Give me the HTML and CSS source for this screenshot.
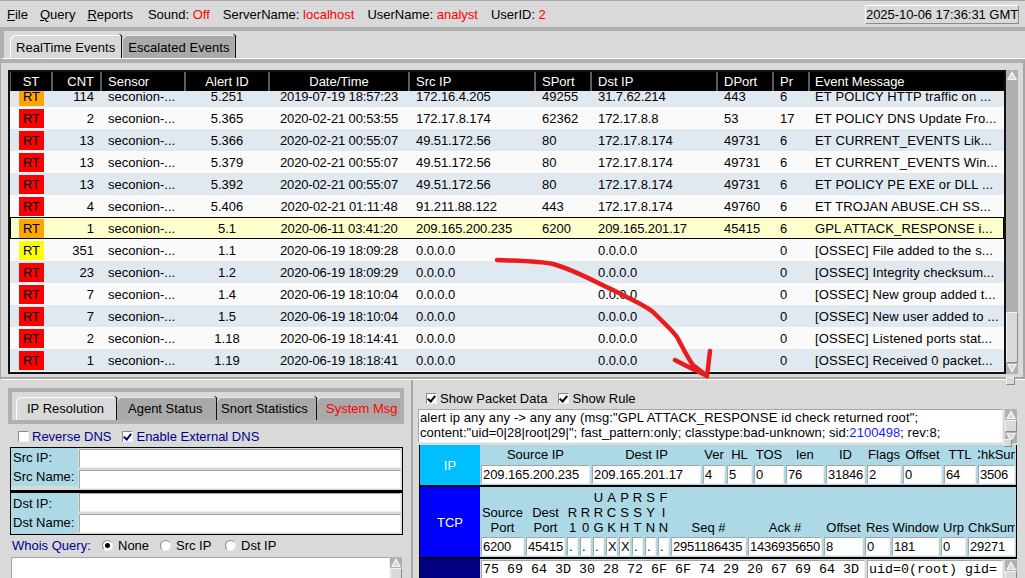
FILE: index.html
```html
<!DOCTYPE html>
<html lang="en">
<head>
    <meta charset="UTF-8">
    <title>Sguil</title>
    <link rel="stylesheet" href="styles.css">
</head>
<body>
    <div class="menubar">
        <span class="menu"><u>F</u>ile</span>
        <span class="menu menu-query"><u>Q</u>uery</span>
        <span class="menu menu-reports"><u>R</u>eports</span>
        <span class="info info-sound">Sound: <b>Off</b></span>
        <span class="info info-server">ServerName: <b>localhost</b></span>
        <span class="info info-user">UserName: <b>analyst</b></span>
        <span class="info info-id">UserID: <b>2</b></span>
        <span class="clock">2025-10-06 17:36:31 GMT</span>
    </div>

    <div class="top-tabs">
        <span class="tab active">RealTime Events</span>
        <span class="tab">Escalated Events</span>
    </div>

    <div class="events">
        <div class="event-table">
            <div class="row head">
                <span class="c">ST</span><span class="r">CNT</span><span>Sensor</span><span class="c">Alert ID</span><span class="c">Date/Time</span><span>Src IP</span><span>SPort</span><span>Dst IP</span><span>DPort</span><span>Pr</span><span>Event Message</span>
            </div>
            <div class="rows">
                <div class="row first"><span class="st orange">RT</span><span class="r">114</span><span>seconion-...</span><span class="c">5.251</span><span class="c">2019-07-19 18:57:23</span><span>172.16.4.205</span><span>49255</span><span>31.7.62.214</span><span>443</span><span>6</span><span>ET POLICY HTTP traffic on ...</span></div>
                <div class="row"><span class="st red">RT</span><span class="r">2</span><span>seconion-...</span><span class="c">5.365</span><span class="c">2020-02-21 00:53:55</span><span>172.17.8.174</span><span>62362</span><span>172.17.8.8</span><span>53</span><span>17</span><span>ET POLICY DNS Update Fro...</span></div>
                <div class="row"><span class="st red">RT</span><span class="r">13</span><span>seconion-...</span><span class="c">5.366</span><span class="c">2020-02-21 00:55:07</span><span>49.51.172.56</span><span>80</span><span>172.17.8.174</span><span>49731</span><span>6</span><span>ET CURRENT_EVENTS Lik...</span></div>
                <div class="row"><span class="st red">RT</span><span class="r">13</span><span>seconion-...</span><span class="c">5.379</span><span class="c">2020-02-21 00:55:07</span><span>49.51.172.56</span><span>80</span><span>172.17.8.174</span><span>49731</span><span>6</span><span>ET CURRENT_EVENTS Win...</span></div>
                <div class="row"><span class="st red">RT</span><span class="r">13</span><span>seconion-...</span><span class="c">5.392</span><span class="c">2020-02-21 00:55:07</span><span>49.51.172.56</span><span>80</span><span>172.17.8.174</span><span>49731</span><span>6</span><span>ET POLICY PE EXE or DLL ...</span></div>
                <div class="row"><span class="st red">RT</span><span class="r">4</span><span>seconion-...</span><span class="c">5.406</span><span class="c">2020-02-21 01:11:48</span><span>91.211.88.122</span><span>443</span><span>172.17.8.174</span><span>49760</span><span>6</span><span>ET TROJAN ABUSE.CH SS...</span></div>
                <div class="row selected"><span class="st orange">RT</span><span class="r">1</span><span>seconion-...</span><span class="c">5.1</span><span class="c">2020-06-11 03:41:20</span><span>209.165.200.235</span><span>6200</span><span>209.165.201.17</span><span>45415</span><span>6</span><span>GPL ATTACK_RESPONSE i...</span></div>
                <div class="row"><span class="st yellow">RT</span><span class="r">351</span><span>seconion-...</span><span class="c">1.1</span><span class="c">2020-06-19 18:09:28</span><span>0.0.0.0</span><span></span><span>0.0.0.0</span><span></span><span>0</span><span>[OSSEC] File added to the s...</span></div>
                <div class="row"><span class="st red">RT</span><span class="r">23</span><span>seconion-...</span><span class="c">1.2</span><span class="c">2020-06-19 18:09:29</span><span>0.0.0.0</span><span></span><span>0.0.0.0</span><span></span><span>0</span><span>[OSSEC] Integrity checksum...</span></div>
                <div class="row"><span class="st red">RT</span><span class="r">7</span><span>seconion-...</span><span class="c">1.4</span><span class="c">2020-06-19 18:10:04</span><span>0.0.0.0</span><span></span><span>0.0.0.0</span><span></span><span>0</span><span>[OSSEC] New group added t...</span></div>
                <div class="row"><span class="st red">RT</span><span class="r">7</span><span>seconion-...</span><span class="c">1.5</span><span class="c">2020-06-19 18:10:04</span><span>0.0.0.0</span><span></span><span>0.0.0.0</span><span></span><span>0</span><span>[OSSEC] New user added to ...</span></div>
                <div class="row"><span class="st red">RT</span><span class="r">2</span><span>seconion-...</span><span class="c">1.18</span><span class="c">2020-06-19 18:14:41</span><span>0.0.0.0</span><span></span><span>0.0.0.0</span><span></span><span>0</span><span>[OSSEC] Listened ports stat...</span></div>
                <div class="row"><span class="st red">RT</span><span class="r">1</span><span>seconion-...</span><span class="c">1.19</span><span class="c">2020-06-19 18:18:41</span><span>0.0.0.0</span><span></span><span>0.0.0.0</span><span></span><span>0</span><span>[OSSEC] Received 0 packet...</span></div>
            </div>
        </div>
        <div class="vscroll events-scroll">
            <span class="arrow up"></span>
            <span class="trough"></span>
            <span class="thumb"></span>
            <span class="arrow down"></span>
        </div>
    </div>

    <div class="panes">
        <div class="left-pane">
            <div class="sub-tabs">
                <span class="tab active">IP Resolution</span>
                <span class="tab">Agent Status</span>
                <span class="tab">Snort Statistics</span>
                <span class="tab alert">System Msg</span>
            </div>
            <div class="dns-options">
                <span class="check"></span><span class="opt opt-rev">Reverse DNS</span>
                <span class="check on navy"></span><span class="opt">Enable External DNS</span>
            </div>
            <div class="addr-box">
                <div class="addr-labels"><span>Src IP:</span><span>Src Name:</span></div>
                <div class="addr-fields"><div class="field"></div><div class="field"></div></div>
            </div>
            <div class="addr-box second">
                <div class="addr-labels"><span>Dst IP:</span><span>Dst Name:</span></div>
                <div class="addr-fields"><div class="field"></div><div class="field"></div></div>
            </div>
            <div class="whois">
                <span class="whois-title">Whois Query:</span>
                <span class="radio on"></span><span class="radio-label">None</span>
                <span class="radio"></span><span class="radio-label wide">Src IP</span>
                <span class="radio"></span><span class="radio-label">Dst IP</span>
            </div>
            <div class="whois-out">
                <div class="out-text"></div>
                <div class="vscroll"><span class="arrow up"></span><span class="thumb"></span></div>
            </div>
        </div>

        <div class="right-pane">
            <div class="packet-options">
                <span class="check on"></span><span class="opt opt-packet">Show Packet Data</span>
                <span class="check on"></span><span class="opt">Show Rule</span>
            </div>
            <div class="rule-row">
                <div class="rule-text">
                    <div class="rule-line wide-line">alert ip any any -&gt; any any (msg:"GPL ATTACK_RESPONSE id check returned root";</div>
                    <div class="rule-line">content:"uid=0|28|root|29|"; fast_pattern:only; classtype:bad-unknown; sid:<span class="sid">2100498</span>; rev:8;</div>
                </div>
                <div class="vscroll rule-scroll"><span class="arrow up"></span><span class="thumb"></span><span class="arrow down"></span></div>
            </div>
            <div class="packet">
                <div class="proto">
                    <div class="proto-name ip">IP</div>
                    <div class="grid grid-ip">
                        <span>Source IP</span><span>Dest IP</span><span>Ver</span><span>HL</span><span>TOS</span><span>len</span><span>ID</span><span>Flags</span><span>Offset</span><span>TTL</span><span>ChkSum</span>
                        <div class="field addr">209.165.200.235</div><div class="field addr">209.165.201.17</div><div class="field">4</div><div class="field">5</div><div class="field">0</div><div class="field">76</div><div class="field">31846</div><div class="field">2</div><div class="field">0</div><div class="field">64</div><div class="field">3506</div>
                    </div>
                </div>
                <div class="proto">
                    <div class="proto-name tcp">TCP</div>
                    <div class="grid grid-tcp">
                        <span>Source<br>Port</span><span>Dest<br>Port</span><span>R<br>1</span><span>R<br>0</span><span>U<br>R<br>G</span><span>A<br>C<br>K</span><span>P<br>S<br>H</span><span>R<br>S<br>T</span><span>S<br>Y<br>N</span><span>F<br>I<br>N</span><span>Seq #</span><span>Ack #</span><span>Offset</span><span>Res</span><span>Window</span><span>Urp</span><span>ChkSum</span>
                        <div class="field">6200</div><div class="field">45415</div><div class="field">.</div><div class="field">.</div><div class="field">.</div><div class="field">X</div><div class="field">X</div><div class="field">.</div><div class="field">.</div><div class="field">.</div><div class="field">2951186435</div><div class="field">1436935650</div><div class="field">8</div><div class="field">0</div><div class="field">181</div><div class="field">0</div><div class="field">29271</div>
                    </div>
                </div>
                <div class="proto data-row">
                    <div class="proto-name data"></div>
                    <div class="data-body">
                        <div class="field mono hex">75 69 64 3D 30 28 72 6F 6F 74 29 20 67 69 64 3D</div>
                        <div class="field mono ascii">uid=0(root) gid=</div>
                        <div class="vscroll"><span class="arrow up"></span><span class="thumb"></span></div>
                    </div>
                </div>
            </div>
        </div>
    </div>

    <span class="sash-handle top-sash"></span>
    <span class="sash-handle rule-sash"></span>

    <!-- red annotation drawn on top of the window -->
    <svg class="annotation" width="1025" height="578" viewBox="0 0 1025 578">
        <path d="M497 260 C520 261 540 261 553 264 C575 270 595 282 613 290 C630 299 645 305 653 312 C665 324 672 330 677 337 C684 350 689 360 693 365 L707 376 M675 360 C686 366 697 371 707 376 C708 368 709 360 710 351" />
    </svg>
</body>
</html>
```

FILE: styles.css
```css
html, body {
    margin: 0;
    padding: 0;
    width: 1025px;
    height: 578px;
    overflow: hidden;
}
body {
    position: relative;
    background: #d9d9d9;
    color: #000;
    font-family: "Liberation Sans", Arial, sans-serif;
    font-size: 13px;
}

/* menu bar */
.menubar {
    display: flex;
    align-items: center;
    height: 25px;
    padding: 1px 0 0 7px;
    border-top: 1px solid #a6a6a6;
    border-bottom: 4px solid #b0b0b0;
}
.menu-query { margin-left: 12px; }
.menu-reports { margin-left: 12px; }
.info b { color: #ff0000; font-weight: normal; }
.info-sound { margin-left: 15px; }
.info-server { margin-left: 13px; }
.info-user { margin-left: 13px; }
.info-id { margin-left: 13px; }
.clock {
    margin-left: auto;
    margin-right: 6px;
    width: 154px;
    height: 19px;
    line-height: 17px;
    box-sizing: border-box;
    text-align: center;
    white-space: nowrap;
    letter-spacing: -0.05px;
    border: 1px solid;
    border-color: #fff #8a8a8a #8a8a8a #fff;
}

/* tabs */
.top-tabs {
    display: flex;
    align-items: flex-end;
    height: 27px;
    padding-left: 6px;
    border-left: 4px solid #b0b0b0;
    border-bottom: 1px solid #fff;
}
.tab {
    position: relative;
    flex: none;
    box-sizing: border-box;
    display: block;
    height: 23px;
    line-height: 21px;
    padding: 0 6px;
    background: #a9a9a9;
    border-top: 1px solid #e8e8e8;
    border-right: 1px solid #111;
    border-top-left-radius: 6px;
    white-space: nowrap;
}
.top-tabs .tab { line-height: 23px; margin-right: 1px; padding: 0 6px 0 5px; letter-spacing: 0.05px; }
.top-tabs .tab + .tab { width: 113px; }
.tab.active {
    background: #d9d9d9;
    border-left: 1px solid #fff;
    border-top-color: #fff;
}
.tab::after {
    content: "";
    position: absolute;
    top: -1px;
    right: -2px;
    width: 4px;
    height: 1px;
    background: #333;
    transform: rotate(45deg);
}

/* events table */
.events {
    display: flex;
    height: 320px;
    border-top: 4px solid #b0b0b0;
    border-bottom: 2px solid #a6a6a6;
    border-left: 1px solid #a6a6a6;
    border-right: 2px solid #a6a6a6;
    padding: 7px 0 0 7px;
    box-sizing: border-box;
}
.event-table {
    box-sizing: border-box;
    width: 998px;
    height: 304px;
    border: 2px solid #111;
    background: #fafafa;
}
.row {
    display: grid;
    grid-template-columns: 40px 47px 82px 82px 138px 124px 54px 124px 54px 34px 194px;
    column-gap: 2px;
    padding-left: 1px;
    height: 22px;
    line-height: 23px;
    white-space: nowrap;
}
.row > span { padding-left: 6px; overflow: hidden; }
.row > .c { padding: 0; text-align: center; }
.row > .r { padding: 0 6px 0 0; text-align: right; }
.row > span:last-child { padding-left: 5px; letter-spacing: 0.13px; }
.row > span:nth-child(5) { letter-spacing: -0.14px; }
.row > span:nth-child(6),
.row > span:nth-child(8) { letter-spacing: -0.1px; }
.row.head {
    height: 19px;
    line-height: 19px;
    background: #5c5c5c;
    color: #fff;
}
.row.head > span { background: #000; letter-spacing: 0; }
.rows { height: 281px; }
.rows .row:nth-child(odd) { background: #e0e8f0; }
.rows .first { height: 16px; line-height: 11px; }
.rows .first > span { overflow: visible; }
.rows .row.selected {
    background: #ffffcc;
    box-shadow: inset 0 0 0 1px #000;
}
.rows .row > .st {
    padding: 0;
    width: 25px;
    height: 19px;
    line-height: 19px;
    margin: 2px 0 0 8px;
    text-align: center;
    letter-spacing: 0;
}
.rows .first > .st { height: 15px; line-height: 11px; margin-top: 0; }
.red { background: #ff0000; }
.orange { background: #ffa500; }
.yellow { background: #ffff00; }

/* scrollbars */
.vscroll {
    display: flex;
    flex-direction: column;
    flex: none;
    width: 12px;
    background: #b0b0b0;
    box-sizing: border-box;
}
.events-scroll { height: 304px; }
.arrow {
    display: block;
    height: 11px;
    flex: none;
    position: relative;
}
.arrow::before,
.arrow::after {
    content: "";
    position: absolute;
    width: 0;
    height: 0;
}
.arrow::before {
    left: 1px;
    border-left: 5px solid transparent;
    border-right: 5px solid transparent;
}
.arrow::after {
    left: 3px;
    border-left: 3px solid transparent;
    border-right: 3px solid transparent;
}
.arrow.up::before { top: 1px; border-bottom: 9px solid #f5f5f5; }
.arrow.up::after { top: 4px; border-bottom: 5px solid #d9d9d9; }
.arrow.down::before { top: 1px; border-top: 9px solid #f5f5f5; }
.arrow.down::after { top: 2px; border-top: 5px solid #d9d9d9; }
.trough { display: block; height: 231px; flex: none; }
.thumb {
    display: block;
    flex: 1;
    background: #d9d9d9;
    border: 1px solid;
    border-color: #f2f2f2 #8a8a8a #8a8a8a #f2f2f2;
}

/* lower panes */
.panes {
    display: flex;
    height: 200px;
    margin-left: 2px;
    border-top: 1px solid #fff;
}
.left-pane {
    width: 409px;
    flex: none;
    padding: 8px 0 0 0;
    box-sizing: border-box;
}
.sub-tabs {
    display: flex;
    align-items: flex-end;
    box-sizing: border-box;
    width: 396px;
    height: 36px;
    margin-left: 6px;
    padding-left: 4px;
    border: 4px solid #b0b0b0;
    background: #d9d9d9;
    overflow: hidden;
}
.sub-tabs .tab { width: 100px; padding: 0 0 0 11px; }
.sub-tabs .tab.active { width: 101px; padding-left: 10px; }
.sub-tabs .tab:nth-child(3) { padding-left: 4px; }
.sub-tabs .alert { color: #ff0000; border-right: 0; padding-left: 9px; }

.check, .radio {
    display: inline-block;
    position: relative;
    flex: none;
    box-sizing: border-box;
    background: #fff;
}
.check {
    width: 11px;
    height: 11px;
    border: 1px solid;
    border-color: #8a8a8a #eee #eee #8a8a8a;
}
.check.on::after {
    content: "";
    position: absolute;
    left: 2px;
    top: 0;
    width: 3px;
    height: 6px;
    border: solid #000;
    border-width: 0 2px 2px 0;
    transform: rotate(40deg);
}
.check.navy::after { border-color: #00008b; }
.radio {
    width: 11px;
    height: 11px;
    border-radius: 50%;
    border: 1px solid;
    border-color: #8a8a8a #eee #eee #8a8a8a;
}
.radio.on::after {
    content: "";
    position: absolute;
    left: 2px;
    top: 2px;
    width: 5px;
    height: 5px;
    border-radius: 50%;
    background: #000;
}
.dns-options {
    display: flex;
    align-items: center;
    box-sizing: border-box;
    height: 23px;
    padding: 1px 0 0 16px;
    color: #00008b;
}
.dns-options .opt { margin-left: 3px; }
.opt-rev { margin-right: 11px; }

.addr-box {
    display: flex;
    box-sizing: border-box;
    width: 393px;
    height: 46px;
    margin-left: 8px;
    border: 1px solid #000;
    border-bottom-width: 3px;
    background: #d9d9d9;
}
.addr-box.second {
    height: 42px;
    border-width: 0 1px 1px;
}
.addr-labels {
    display: flex;
    flex-direction: column;
    align-self: flex-start;
    width: 67px;
    height: 38px;
    padding-left: 2px;
    line-height: 19px;
    box-sizing: border-box;
    background: #add8e6;
}
.second .addr-labels {
    align-self: stretch;
    height: auto;
    padding-top: 1px;
}
.addr-fields {
    flex: 1;
    display: flex;
    flex-direction: column;
    gap: 2px;
    padding: 1px 1px 0 1px;
}
.second .addr-fields { padding-top: 0; }
.field {
    box-sizing: border-box;
    flex: none;
    height: 19px;
    line-height: 17px;
    padding-left: 1px;
    background: #fff;
    border: 1px solid;
    border-color: #a6a6a6 #eee #eee #a6a6a6;
    white-space: nowrap;
    overflow: hidden;
}
.whois {
    display: flex;
    align-items: center;
    height: 21px;
    padding-left: 10px;
}
.whois-title { color: #00008b; width: 90px; }
.radio-label { margin: 0 0 0 5px; width: 42px; }
.radio-label.wide { width: 49px; }
.whois-out {
    display: flex;
    height: 30px;
    margin: 1px 0 0 9px;
}
.out-text {
    width: 379px;
    background: #fff;
    border: 1px solid;
    border-color: #a6a6a6 #eee #eee #a6a6a6;
    box-sizing: border-box;
}

.right-pane {
    flex: 1;
    padding-left: 5px;
    border-left: 2px solid #a6a6a6;
    box-sizing: border-box;
}
.packet-options {
    display: flex;
    align-items: center;
    height: 29px;
    margin-left: 8px;
    padding: 7px 0 0;
    box-sizing: border-box;
}
.packet-options .opt { margin-left: 3px; letter-spacing: 0.03px; }
.opt-packet { margin-right: 11px; }
.rule-row { display: flex; }
.rule-text {
    box-sizing: border-box;
    width: 585px;
    height: 34px;
    padding: 0 0 0 1px;
    line-height: 15px;
    background: #fff;
    border: 1px solid;
    border-color: #a6a6a6 #eee #eee #a6a6a6;
    white-space: nowrap;
}
.rule-line { letter-spacing: 0.04px; }
.wide-line { letter-spacing: 0.125px; }
.sid { color: #1a1aff; }
.rule-scroll { margin-left: 2px; height: 34px; }
.packet {
    margin: 2px 0 0 1px;
    width: 598px;
    box-sizing: border-box;
    border-left: 1px solid #000;
    border-right: 1px solid #000;
}
.proto {
    display: flex;
    border-bottom: 2px solid #000;
    background: #add8e6;
}
.proto-name {
    flex: none;
    display: flex;
    align-items: center;
    justify-content: center;
    width: 60px;
    color: #fff;
}
.proto-name.ip { background: #00bfff; }
.proto-name.tcp { background: #0000ff; }
.proto-name.data { background: #000080; }
.grid {
    display: grid;
    column-gap: 2px;
    padding-left: 1px;
    width: 536px;
    box-sizing: border-box;
    overflow: hidden;
    white-space: nowrap;
    line-height: 15px;
}
.grid .field { letter-spacing: -0.22px; }
.grid .field.addr { letter-spacing: -0.1px; }
.grid > span {
    display: flex;
    justify-content: center;
    text-align: center;
    align-self: end;
    overflow: hidden;
}
.grid-ip {
    grid-template-columns: 109px 109px 22px 25px 30px 38px 39px 34px 39px 32px 37px;
    grid-template-rows: 20px 20px;
    height: 40px;
}
.grid-ip > span { align-self: center; padding-bottom: 2px; }
.grid-tcp {
    grid-template-columns: 43px 39px 11px 11px 11px 11px 11px 11px 11px 11px 75px 74px 39px 25px 47px 25px 47px;
    grid-template-rows: 48px 22px;
    height: 70px;
}
.grid-tcp > span:nth-child(17) { justify-content: flex-start; }
.grid-tcp .field { margin-top: 2px; }
.data-row { border-bottom: 0; height: 40px; }
.data-body {
    display: flex;
    gap: 2px;
    padding: 1px 0 0 1px;
    background: #d9d9d9;
}
.mono {
    font-family: "Liberation Mono", "Courier New", monospace;
    font-size: 13.33px;
    height: 40px;
}
.hex { width: 384px; }
.ascii { width: 136px; }

/* sash handles and annotation lie over the window */
.sash-handle {
    position: absolute;
    width: 9px;
    height: 8px;
    background: #d9d9d9;
    border: 1px solid;
    border-color: #f2f2f2 #8a8a8a #8a8a8a #f2f2f2;
    box-sizing: border-box;
}
.top-sash { left: 1006px; top: 377px; }
.rule-sash { left: 1003px; top: 439px; }
.annotation {
    position: absolute;
    left: 0;
    top: 0;
    pointer-events: none;
}
.annotation path {
    fill: none;
    stroke: #e81c1c;
    stroke-width: 4.5;
    stroke-linecap: round;
    stroke-linejoin: round;
}
```
